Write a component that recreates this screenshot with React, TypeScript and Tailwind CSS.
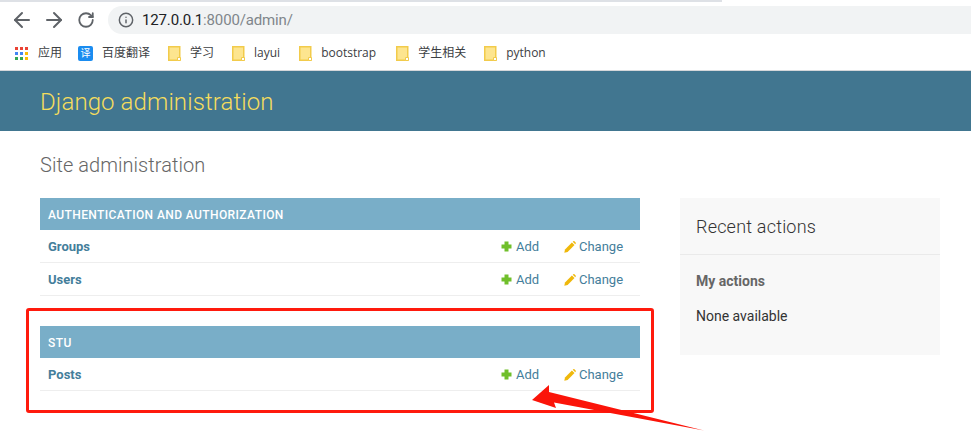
import React from 'react';
import { ArrowLeft, ArrowRight, RotateCw, Info } from 'lucide-react';

const cjk = "font-['Roboto','Noto_Sans_CJK_SC',sans-serif]";

const Folder: React.FC = () => (
  <svg width="13" height="15" viewBox="0 0 13 15" className="shrink-0">
    <path d="M0.75 0.75H11.75V14.25H0.75Z" fill="#fde58f" stroke="#f2cb4b" strokeWidth="1.5" />
    <path d="M9.5 11.5H12.5V14.5H9.5Z" fill="#fff" stroke="#f2cb4b" strokeWidth="1" />
  </svg>
);

const AppsIcon: React.FC = () => {
  const colors = ['#ea4335', '#ea4335', '#ea4335', '#4285f4', '#4285f4', '#fbbc04', '#34a853', '#34a853', '#fbbc04'];
  return (
    <div className="grid grid-cols-3 gap-[2px] w-[13px] h-[13px] shrink-0">
      {colors.map((c, i) => (
        <div key={i} className="w-[3px] h-[3px]" style={{ backgroundColor: c }} />
      ))}
    </div>
  );
};

const Bookmark: React.FC<{ label: string; className: string }> = ({ label, className }) => (
  <div className={`flex items-center gap-[9px] ${className}`}>
    <Folder />
    <span className="text-[12px] text-[#3c4043] leading-none font-['Open_Sans','Noto_Sans_CJK_SC',sans-serif]">{label}</span>
  </div>
);

const BrowserBar: React.FC = () => (
  <div className={`h-[71px] bg-white border-b border-[#d5d7da] ${cjk}`}>
    <div className="h-[2px] w-[722px] bg-[#dee1e6]" />
    <div className="flex items-center h-[28px] mt-[4px]">
      <div className="flex items-center w-[108px] pl-[6px] text-[#5f6368]">
        <div className="w-[32px] flex justify-center"><ArrowLeft size={24} strokeWidth={2} /></div>
        <div className="w-[32px] flex justify-center"><ArrowRight size={24} strokeWidth={2} /></div>
        <div className="w-[32px] flex justify-center"><RotateCw size={18} strokeWidth={2.4} /></div>
      </div>
      <div className="flex-1 h-[28px] bg-[#f1f3f4] rounded-l-full flex items-center pl-[10px] gap-[8px]">
        <Info size={16} strokeWidth={2.2} className="text-[#5f6368]" />
        <span className="text-[15px] tracking-[-0.15px] text-[#202124]">
          127.0.0.1<span className="text-[#80868b]">:8000/admin/</span>
        </span>
      </div>
    </div>
    <div className="flex items-center h-[24px] mt-[7px] pl-[15px]">
      <AppsIcon />
      <span className="ml-[10px] text-[12px] text-[#3c4043] leading-none">应用</span>
      <div className="ml-[16px] w-[15px] h-[15px] rounded-[2px] bg-[#1a8cf0] text-white text-[10px] leading-[15px] text-center">译</div>
      <span className="ml-[9px] text-[12px] text-[#3c4043] leading-none">百度翻译</span>
      <Bookmark label="学习" className="ml-[18px]" />
      <Bookmark label="layui" className="ml-[18px]" />
      <Bookmark label="bootstrap" className="ml-[19px]" />
      <Bookmark label="学生相关" className="ml-[20px]" />
      <Bookmark label="python" className="ml-[18px]" />
    </div>
  </div>
);

const PlusIcon: React.FC = () => (
  <svg width="11" height="11" viewBox="0 0 11 11" className="shrink-0">
    <path d="M3.5 0.5H7.5V3.5H10.5V7.5H7.5V10.5H3.5V7.5H0.5V3.5H3.5Z" fill="#70bf2b" />
  </svg>
);

const PencilIcon: React.FC = () => (
  <svg width="12" height="12" viewBox="0 0 12 12" className="shrink-0">
    <path d="M0.3 11.7L1 8.4L7.9 1.5L10.5 4.1L3.6 11Z" fill="#efb80b" />
    <path d="M8.7 0.7L9.4 0.3C9.8 0 10.2 0 10.6 0.4L11.6 1.4C12 1.8 12 2.2 11.7 2.6L11.3 3.3Z" fill="#efb80b" />
  </svg>
);

const ModelRow: React.FC<{ name: string }> = ({ name }) => (
  <div className="flex items-center h-[33px] border-b border-[#eeeeee] pl-[8px] pt-[1px] text-[13px]">
    <span className="flex-1 font-bold text-[#447e9b]">{name}</span>
    <div className="flex items-center gap-[4px] w-[63px]">
      <PlusIcon />
      <span className="text-[#447e9b]">Add</span>
    </div>
    <div className="flex items-center gap-[3px] w-[76px]">
      <PencilIcon />
      <span className="text-[#447e9b]">Change</span>
    </div>
  </div>
);

const AppModule: React.FC<{ title: string; models: string[]; className?: string }> = ({ title, models, className }) => (
  <div className={className}>
    <div className="h-[32px] bg-[#79aec8] flex items-center pl-[8px] pt-[1px] text-[12px] font-medium tracking-[0.4px] text-white">{title}</div>
    {models.map((m) => (
      <ModelRow key={m} name={m} />
    ))}
  </div>
);

const Annotation: React.FC = () => (
  <>
    <div className="absolute left-[26px] top-[308px] w-[628px] h-[105px] border-[3px] border-[#ff1a0d] rounded-[3px]" />
    <svg className="absolute left-[525px] top-[380px]" width="185" height="55" viewBox="0 0 185 55">
      <path d="M7 20L24 5L24 12L179 50.5L29 22.5L31 28Z" fill="#fb1409" />
    </svg>
  </>
);

export default function App() {
  return (
    <div className={`relative w-[971px] h-[444px] overflow-hidden bg-white ${cjk}`}>
      <BrowserBar />
      <header className="h-[60px] bg-[#417690] flex items-center pl-[40px] pt-[2px]">
        <h1 className="text-[24px] font-light tracking-[0.1px] text-[#f5dd5d]">Django administration</h1>
      </header>
      <main className="px-[40px] pt-[21px]">
        <h2 className="text-[20px] leading-[26px] font-light tracking-[0.05px] text-[#666666]">Site administration</h2>
        <div className="flex gap-[40px] mt-[20px] items-start">
          <div className="w-[600px] shrink-0">
            <AppModule title="AUTHENTICATION AND AUTHORIZATION" models={['Groups', 'Users']} />
            <AppModule title="STU" models={['Posts']} className="mt-[30px]" />
          </div>
          <aside className="w-[260px] h-[157px] shrink-0 bg-[#f8f8f8]">
            <div className="h-[57px] border-b border-[#eaeaea] pl-[16px] flex items-center text-[18px] font-light tracking-[0.2px] text-[#333333]">
              Recent actions
            </div>
            <div className="pl-[16px] pt-[16px] text-[14px]">
              <div className="font-bold text-[#666666]">My actions</div>
              <div className="mt-[14px] text-[#333333]">None available</div>
            </div>
          </aside>
        </div>
      </main>
      <Annotation />
    </div>
  );
}
